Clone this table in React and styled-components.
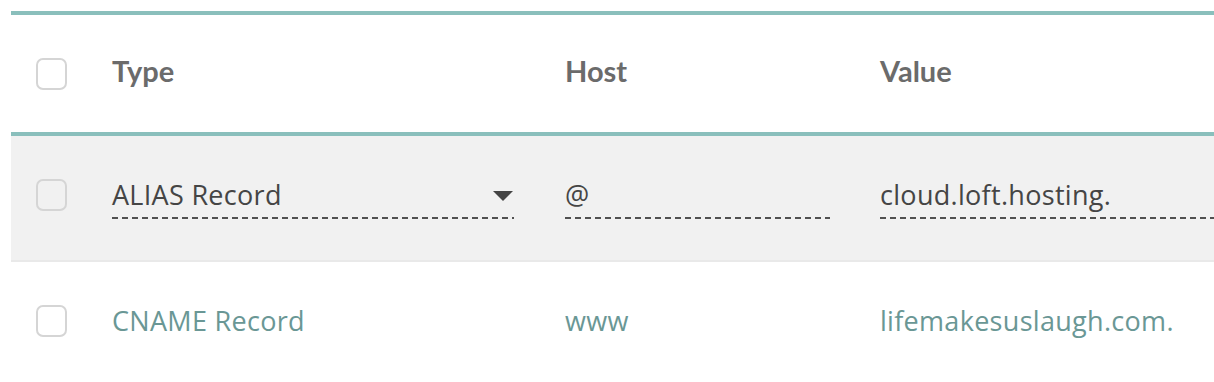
import React from "react";
import styled, { createGlobalStyle } from "styled-components";

const GlobalStyle = createGlobalStyle`
  html, body { margin: 0; padding: 0; background: #ffffff; }
  body { font-family: "Open Sans", "Liberation Sans", sans-serif; }
`;

const Wrapper = styled.div`
  padding: 11px 0 0 11px;
  overflow: hidden;
  width: 1214px;
  box-sizing: border-box;
`;

const Table = styled.div`
  border-top: 4px solid #8abfbc;
  width: 1400px;
`;

const cols = "101px 453px 315px 1fr";

const HeaderRow = styled.div`
  display: grid;
  grid-template-columns: ${cols};
  align-items: center;
  height: 117px;
  border-bottom: 4px solid #8abfbc;
`;

const HeaderCell = styled.div`
  font-family: Lato, "Open Sans", sans-serif;
  font-weight: 700;
  font-size: 29px;
  color: #6b6b6b;
  padding-bottom: 6px;
`;

const Row = styled.div`
  display: grid;
  grid-template-columns: ${cols};
  align-items: ${(p) => (p.$editing ? "start" : "center")};
  box-sizing: border-box;
  height: ${(p) => (p.$editing ? "126px" : "118px")};
  padding-top: ${(p) => (p.$editing ? "43px" : "0")};
  background: ${(p) => (p.$editing ? "#f1f1f1" : "#ffffff")};
  border-bottom: ${(p) => (p.$editing ? "2px solid #e9e9e9" : "none")};
`;

const CheckCell = styled.div`
  padding-left: 25px;
  display: flex;
  align-items: center;
`;

const Checkbox = styled.span`
  display: block;
  width: 31px;
  height: 32px;
  box-sizing: border-box;
  border: 2px solid #d5d5d5;
  border-radius: 7px;
  background: ${(p) => (p.$filled ? "#ffffff" : "transparent")};
`;

const Field = styled.div`
  position: relative;
  width: ${(p) => p.$w}px;
  box-sizing: border-box;
  height: 40px;
  line-height: 32px;
  font-size: 27px;
  letter-spacing: 0.3px;
  color: #454545;
  padding-bottom: 8px;
  white-space: nowrap;
  background-image: repeating-linear-gradient(
    to right,
    #505050 0 6px,
    transparent 6px 10px
  );
  background-size: 100% 2px;
  background-position: left bottom;
  background-repeat: no-repeat;
`;

const Caret = styled.span`
  position: absolute;
  right: 1px;
  top: 12px;
  width: 0;
  height: 0;
  border-left: 10px solid transparent;
  border-right: 10px solid transparent;
  border-top: 10px solid #444444;
`;

const TextCell = styled.div`
  font-size: 27px;
  letter-spacing: 0.3px;
  color: #6a9795;
  white-space: nowrap;
  line-height: 36px;
`;

export default function App() {
  return (
    <>
      <GlobalStyle />
      <Wrapper>
        <Table>
          <HeaderRow>
            <CheckCell>
              <Checkbox $filled />
            </CheckCell>
            <HeaderCell>Type</HeaderCell>
            <HeaderCell>Host</HeaderCell>
            <HeaderCell>Value</HeaderCell>
          </HeaderRow>
          <Row $editing>
            <CheckCell>
              <Checkbox />
            </CheckCell>
            <div>
              <Field $w={402}>
                ALIAS Record
                <Caret />
              </Field>
            </div>
            <div>
              <Field $w={265}>@</Field>
            </div>
            <div>
              <Field $w={420}>cloud.loft.hosting.</Field>
            </div>
          </Row>
          <Row>
            <CheckCell>
              <Checkbox $filled />
            </CheckCell>
            <TextCell>CNAME Record</TextCell>
            <TextCell>www</TextCell>
            <TextCell>lifemakesuslaugh.com.</TextCell>
          </Row>
        </Table>
      </Wrapper>
    </>
  );
}
